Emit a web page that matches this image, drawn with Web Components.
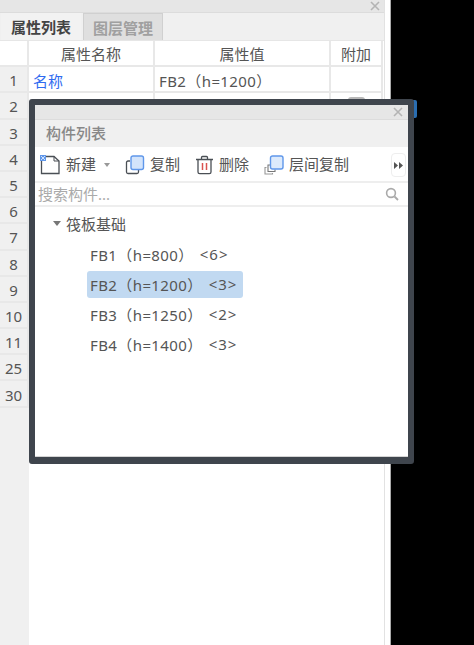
<!DOCTYPE html>
<html>
<head>
<meta charset="utf-8">
<title>构件列表</title>
<style>
  html, body { margin: 0; height: 645px; background: #000; overflow: hidden; }
  body { font-family: "Noto Sans", "Noto Sans CJK SC", sans-serif; font-size: 15px; color: #555; }
</style>
</head>
<body>
<property-panel>
  <component-window></component-window>
</property-panel>

<script>
const closeIcon = `<svg width="10" height="10" viewBox="0 0 10 10"><path d="M1 1L9 9M9 1L1 9" stroke="#b4b4b4" stroke-width="1.6" fill="none"/></svg>`;

const rows = [
  ["1", "名称", "FB2（h=1200）"], ["2"], ["3"], ["4"], ["5"], ["6"], ["7"],
  ["8"], ["9"], ["10"], ["11"], ["25"], ["30"]
];

class PropertyPanel extends HTMLElement {
  constructor() {
    super();
    this.attachShadow({mode: "open"});
    const body = rows.map(r => `
      <div class="num">${r[0]}</div>
      <div class="cell name">${r[1] || ""}</div>
      <div class="cell val">${r[2] || ""}</div>
      <div class="cell"></div>`).join("");
    this.shadowRoot.innerHTML = `
      <style>
        :host { display: block; position: relative; width: 385px; height: 645px; background: #fff;
          border-right: 1px solid #aaa; padding-right: 5px; }
        .inner { width: 385px; height: 645px; border-right: 1px solid #e2e2e2; box-sizing: border-box;
          display: flex; flex-direction: column; position: relative; }
        .title { height: 12px; background: #e6e6e6; border-bottom: 1px solid #dcdcdc; display: flex;
          justify-content: flex-end; align-items: center; padding-right: 4px; }
        .tabs { height: 27px; background: #f0f0f0; display: flex; gap: 2px; padding-left: 1px; border-bottom: 1px solid #e6e6e6; }
        .tab { width: 80px; height: 27px; box-sizing: border-box; display: flex; align-items: center; justify-content: center;
          font-weight: 700; color: #444; background: #f2f2f2; }
        .tab.off { background: #dfdfdf; color: #a0a0a0; border: 1px solid #d0d0d0; border-bottom: none; }
        .main { flex: 1; display: flex; background: linear-gradient(#f0f0f0,#f0f0f0) left / 29px 100% no-repeat #fff; }
        .grid { width: 383px; display: grid; grid-template-columns: 29px 126px 176px 52px;
          grid-auto-rows: 26.2px; align-content: start; }
        .head, .cell, .num { box-sizing: border-box; display: flex; align-items: center; border-bottom: 2px solid #e8e8e8; border-right: 2px solid #e8e8e8; }
        .head { justify-content: center; color: #555; background: #fff; }
        .num { justify-content: center; background: #f0f0f0; color: #555; padding-top: 2px; }
        .cell { padding: 2px 0 0 4px; background: #fff; white-space: nowrap; }
        .val { letter-spacing: .4px; }
        .name { color: #2f6bf0; }
        .handle { position: absolute; left: 348px; top: 97px; width: 17px; height: 3px; background: #b8b8b8; border-radius: 3px 3px 0 0; }
        .stripe { position: absolute; left: 412px; top: 100px; width: 5px; height: 18px; background: #2a6db0; border-radius: 0 2px 2px 0; }
      </style>
      <div class="inner">
        <div class="title">${closeIcon}</div>
        <div class="tabs"><div class="tab">属性列表</div><div class="tab off">图层管理</div></div>
        <div class="main">
          <div class="grid">
            <div class="head"></div><div class="head">属性名称</div><div class="head">属性值</div><div class="head">附加</div>
            ${body}
          </div>
        </div>
        <div class="handle"></div>
      </div>
      <div class="stripe"></div>
      <slot></slot>`;
  }
}

class ToolButton extends HTMLElement {
  constructor() {
    super();
    this.attachShadow({mode: "open"});
    this.shadowRoot.innerHTML = `
      <style>
        :host { display: inline-flex; align-items: center; gap: 5px; white-space: nowrap; color: #555; }
        ::slotted(svg) { display: block; flex: none; }
        .label { padding-bottom: 4px; }
      </style>
      <slot name="icon"></slot><span class="label"><slot></slot></span>`;
  }
}

class ComponentTree extends HTMLElement {
  constructor() {
    super();
    this.attachShadow({mode: "open"});
    const items = [
      ["FB1（h=800）", "<6>"], ["FB2（h=1200）", "<3>", true],
      ["FB3（h=1250）", "<2>"], ["FB4（h=1400）", "<3>"]
    ];
    const html = items.map(i => `<div class="item ${i[2] ? "sel" : ""}"><span>${i[0]}</span><span class="count">${i[1].replace("<", "&lt;").replace(">", "&gt;")}</span></div>`).join("");
    this.shadowRoot.innerHTML = `
      <style>
        :host { display: block; padding: 3px 0 0 18px; }
        .root { display: flex; align-items: center; height: 26px; gap: 5px; color: #555; }
        .arrow { width: 0; height: 0; border-left: 4px solid transparent; border-right: 4px solid transparent; border-top: 5px solid #777; margin-top: 1px; }
        .list { display: flex; flex-direction: column; gap: 3px; margin: 5px 0 0 34px; align-items: flex-start; }
        .item { width: 156px; height: 27px; box-sizing: border-box; display: flex; align-items: center; padding: 0 0 1px 3px; border-radius: 3px; white-space: nowrap; letter-spacing: .4px; }
        .item.sel { background: #c1d9f1; }
        .count { margin-left: 6px; letter-spacing: 1px; }
      </style>
      <div class="root"><span class="arrow"></span><span>筏板基础</span></div>
      <div class="list">${html}</div>`;
  }
}

class ComponentWindow extends HTMLElement {
  constructor() {
    super();
    this.attachShadow({mode: "open"});
    this.shadowRoot.innerHTML = `
      <style>
        :host { display: block; position: absolute; left: 29px; top: 99px; width: 385px; height: 365px; box-sizing: border-box;
          border: 6px solid #3f454d; border-bottom-width: 7px; border-radius: 3px; background: #fff; }
        .wrap { height: 100%; display: flex; flex-direction: column; border-bottom: 1px solid #d4d4d4; box-sizing: border-box; background: #fff; }
        .title { height: 15px; flex: none; background: #e6e6e6; border-bottom: 1px solid #dcdcdc; box-sizing: border-box; display: flex;
          justify-content: flex-end; align-items: center; padding-right: 5px; }
        .head { height: 27px; flex: none; box-sizing: border-box; background: #f0f0f0; display: flex; align-items: center; padding: 0 0 3px 11px; color: #888; font-weight: 500; }
        .bar { height: 36px; flex: none; box-sizing: border-box; display: flex; align-items: center; border-bottom: 2px solid #eee; padding: 2px 2px 0 5px; }
        .caret { width: 0; height: 0; border-left: 3px solid transparent; border-right: 3px solid transparent; border-top: 4px solid #999; margin: 0 15px 0 8px; }
        tool-button { margin-right: 15px; }
        .more { margin-left: auto; width: 15px; height: 24px; box-sizing: border-box; border: 1px solid #eee; border-radius: 4px; display: flex; align-items: center; justify-content: center; }
        .search { height: 24px; flex: none; box-sizing: border-box; display: flex; align-items: center; justify-content: space-between; border-bottom: 2px solid #eee; padding: 0 9px 0 3px; color: #aaa; }
        .search span { padding-bottom: 2px; }
      </style>
      <div class="wrap">
        <div class="title">${closeIcon}</div>
        <div class="head">构件列表</div>
        <div class="bar">
          <tool-button style="margin-right:0">
            <svg slot="icon" width="21" height="20" viewBox="0 0 21 20"><path d="M1.5 6V18.5H19V6L14 1.5H5" fill="none" stroke="#4a4f55" stroke-width="1.3"/><path d="M14 1.5V6H19" fill="none" stroke="#4a4f55" stroke-width="1"/><rect x="0" y="0" width="6" height="6" fill="#5f97ea"/><path d="M1 1L5 5M5 1L1 5" stroke="#cfe0fa" stroke-width="1"/></svg>
            新建
          </tool-button>
          <span class="caret"></span>
          <tool-button>
            <svg slot="icon" width="20" height="20" viewBox="0 0 20 20"><path d="M5 6H3A1.5 1.5 0 0 0 1.5 7.5V17A1.5 1.5 0 0 0 3 18.5H12A1.5 1.5 0 0 0 13.5 17V15" fill="none" stroke="#4a4f55" stroke-width="1.3"/><rect x="6" y="1" width="12.5" height="13.5" rx="2" fill="#d3e4fb" stroke="#5f97ea" stroke-width="1.4"/></svg>
            复制
          </tool-button>
          <tool-button>
            <svg slot="icon" width="19" height="20" viewBox="0 0 19 20"><path d="M1 4.5H18M6.5 4.5V2.5Q6.5 1.5 7.5 1.5H11.5Q12.5 1.5 12.5 2.5V4.5" fill="none" stroke="#4a4f55" stroke-width="1.3"/><path d="M3 4.5V17Q3 18.7 4.7 18.7H14.3Q16 18.7 16 17V4.5" fill="none" stroke="#4a4f55" stroke-width="1.3"/><path d="M7.5 8V15M11.5 8V15" stroke="#d9534f" stroke-width="1.5"/></svg>
            删除
          </tool-button>
          <tool-button style="margin-right:0">
            <svg slot="icon" width="20" height="20" viewBox="0 0 20 20"><path d="M6 10H4V16.5H11V14.5" fill="none" stroke="#777" stroke-width="1.1"/><path d="M2.5 12.5H1V19H8.5V18" fill="none" stroke="#999" stroke-width="1.1"/><rect x="6.5" y="1" width="12.5" height="13" rx="2" fill="#dceafc" stroke="#5f97ea" stroke-width="1.4"/></svg>
            层间复制
          </tool-button>
          <span class="more"><svg width="9" height="7" viewBox="0 0 9 7"><path d="M0 0L4 3.5L0 7ZM5 0L9 3.5L5 7Z" fill="#555"/></svg></span>
        </div>
        <div class="search">
          <span>搜索构件...</span>
          <svg width="14" height="14" viewBox="0 0 14 14"><circle cx="6" cy="6" r="4.4" fill="none" stroke="#aaa" stroke-width="1.6"/><path d="M9.5 9.5L13 13" stroke="#aaa" stroke-width="1.8"/></svg>
        </div>
        <component-tree></component-tree>
      </div>`;
  }
}

window.customElements.define("tool-button", ToolButton);
window.customElements.define("component-tree", ComponentTree);
window.customElements.define("component-window", ComponentWindow);
window.customElements.define("property-panel", PropertyPanel);
</script>
</body>
</html>
